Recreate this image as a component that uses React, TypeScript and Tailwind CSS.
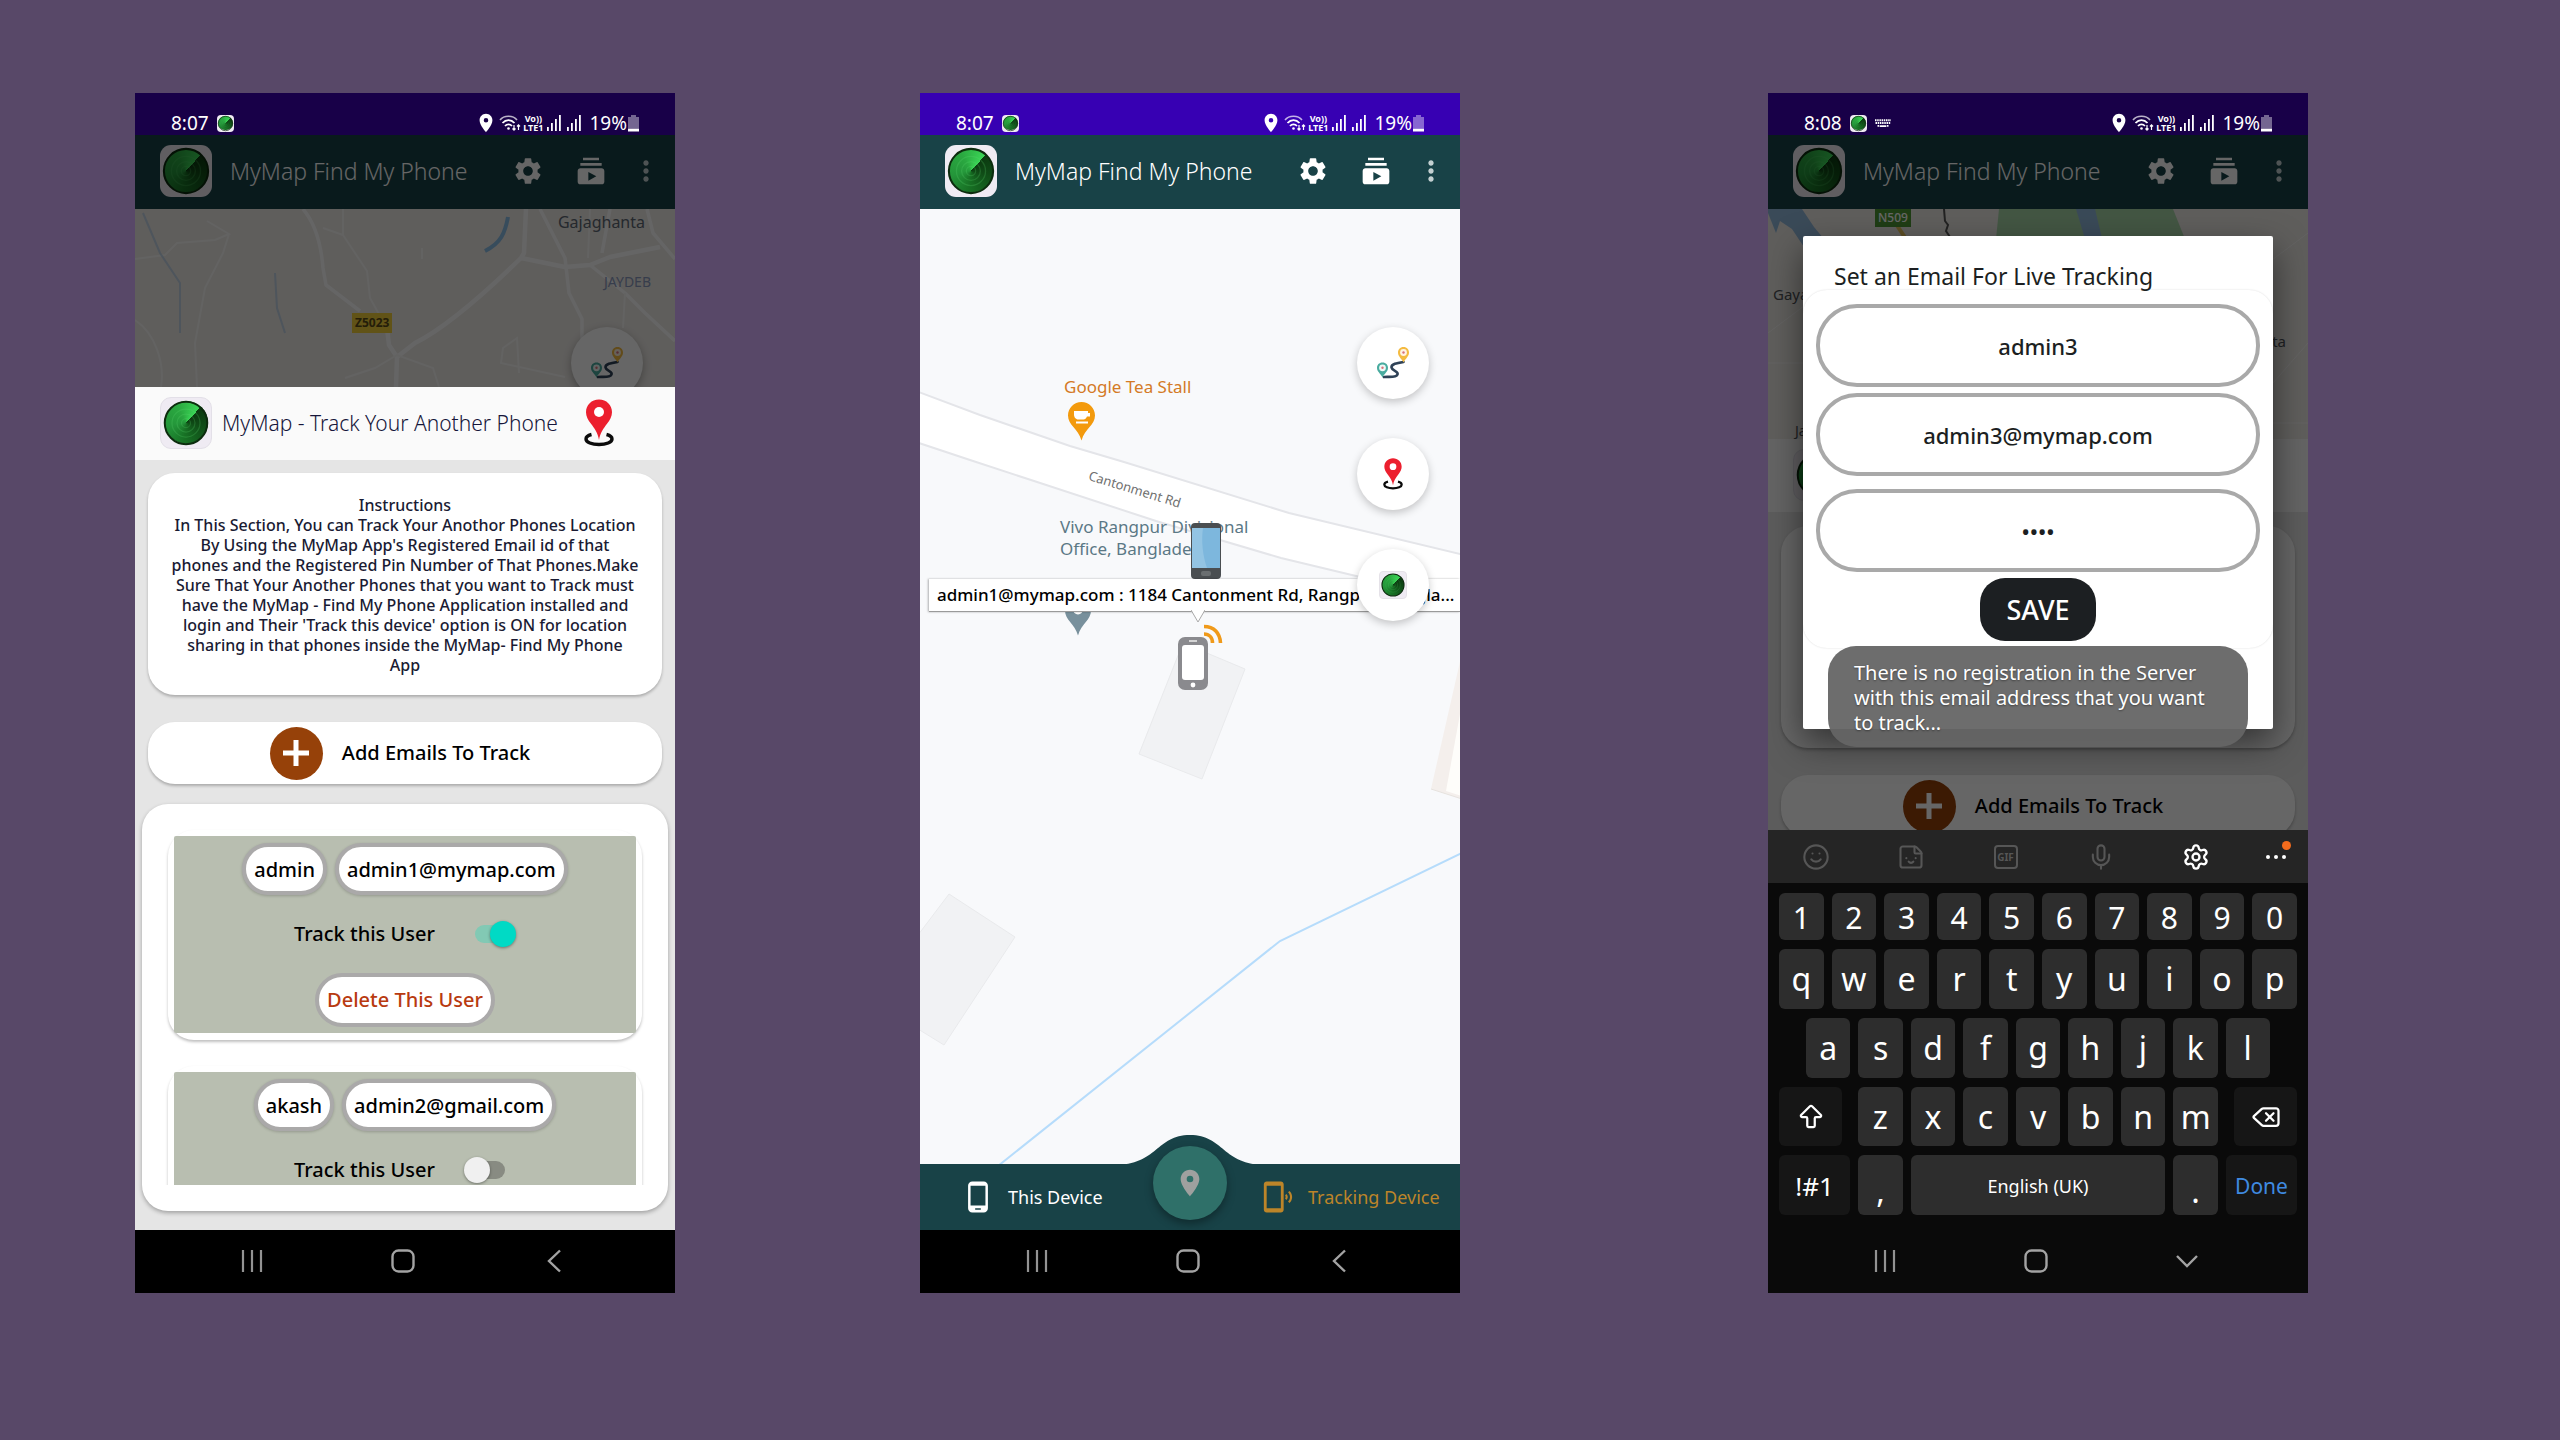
import { useState } from "react";
import type { ReactNode } from "react";
import {
  MdLocationOn,
  MdMoreVert,
  MdPhoneAndroid,
  MdPhonelinkRing,
  MdSettings,
  MdSubscriptions,
} from "react-icons/md";
import { ArrowBigUp, Delete, Mic, Settings, Smile, Sticker } from "lucide-react";

/* ---------- logo and pins ---------- */

function RadarLogo({ className }: { className: string }) {
  return (
    <span className={`relative block shrink-0 bg-[#efebf3] ${className}`}>
      <span className="absolute inset-[7%] rounded-full bg-[conic-gradient(from_42deg,#0b3a10,#0f4a16_15%,#177024_40%,#24963a_60%,#2aa840_80%,#3ad455)]" />
      <svg viewBox="0 0 100 100" className="absolute inset-0 h-full w-full" fill="none" aria-hidden="true">
        <circle cx="50" cy="50" r="42.5" stroke="#0c2c0e" strokeWidth="4" />
        <g stroke="#5ed873" strokeOpacity="0.22" strokeWidth="2.5">
          <circle cx="50" cy="50" r="9" />
          <circle cx="50" cy="50" r="18" />
          <circle cx="50" cy="50" r="28" />
        </g>
      </svg>
    </span>
  );
}

function RedPin({ className }: { className: string }) {
  return (
    <svg viewBox="0 0 30 48" className={className} fill="none" aria-hidden="true">
      <path
        d="M7.5 35.5C3.5 36.5 2 38.5 2 40c0 3.2 5.8 5.5 13 5.5S28 43.2 28 40c0-1.5-1.5-3.5-5.5-4.5"
        stroke="#0b0b0b"
        strokeWidth="3.4"
      />
      <path d="M15 0.5C7.5 0.5 2 6 2 13.2c0 4.3 2.2 7.8 4.8 11.3C10.5 29.5 14 34 15 41c1-7 4.5-11.5 8.2-16.5 2.6-3.5 4.8-7 4.8-11.3C28 6 22.5 0.5 15 0.5z" fill="#ec1f2e" />
      <circle cx="15" cy="13" r="5" fill="#fff" />
    </svg>
  );
}

function RouteIcon() {
  return (
    <svg viewBox="0 0 32 34" className="h-[34px] w-8" fill="none" aria-hidden="true">
      <path d="M26.5 16C20 17 14 18 14.5 21.5S22 25 20.5 28.5 12 30.5 7 31" stroke="#2f4257" strokeWidth="2.6" strokeLinecap="round" />
      <path d="M26.5 1C23 1 21 3.5 21 6.5c0 4 3.5 6 5.5 10 2-4 5.5-6 5.5-10C32 3.5 30 1 26.5 1z" fill="#f4bb41" />
      <circle cx="26.5" cy="6.5" r="3.4" fill="#fff3e4" />
      <circle cx="26.5" cy="6.5" r="1.2" fill="#d9727a" />
      <path d="M5.5 16.5c-3.5 0-5.5 2.5-5.5 5.3 0 4 3.5 5.7 5.5 9.7 2-4 5.5-5.7 5.5-9.7 0-2.8-2-5.3-5.5-5.3z" fill="#49ab9f" />
      <circle cx="5.5" cy="21.8" r="3.4" fill="#eef9f7" />
      <circle cx="5.5" cy="21.8" r="1.2" fill="#d9727a" />
    </svg>
  );
}

/* ---------- system chrome ---------- */

function SignalBars() {
  return (
    <svg viewBox="0 0 14 16" className="h-4 w-[14px]" fill="currentColor" aria-hidden="true">
      <rect x="0" y="12" width="1.8" height="4" />
      <rect x="4" y="8" width="1.8" height="8" />
      <rect x="8" y="4" width="1.8" height="12" />
      <rect x="12" y="0" width="1.8" height="16" />
    </svg>
  );
}

function StatusBar({ time, dimmed = false, keyboard = false }: { time: string; dimmed?: boolean; keyboard?: boolean }) {
  return (
    <header
      className={`flex h-[42px] items-center justify-between pt-[18px] pr-9 pl-9 text-white ${
        dimmed ? "bg-[#180048]" : "bg-[#3700b3]"
      }`}
    >
      <div className="flex items-center gap-2">
        <time className="text-[19px] leading-6">{time}</time>
        <RadarLogo className="h-[17px] w-[17px] rounded-[4px]" />
        {keyboard && (
          <svg viewBox="0 0 16 9" className="h-[9px] w-4" stroke="currentColor" fill="none" aria-hidden="true">
            <path d="M0 1.2h16M0.5 4h15" strokeWidth="2" strokeDasharray="1.5 0.7" />
            <path d="M2.5 6.8h1.5M4.6 7.2h6.8M12 6.8h1.5" strokeWidth="1.8" />
          </svg>
        )}
      </div>
      <div className="flex items-center">
        <MdLocationOn className="h-[22px] w-[22px]" />
        <svg viewBox="0 0 22 18" className="mr-[2px] ml-[2px] h-[18px] w-[22px]" fill="none" stroke="currentColor" aria-hidden="true">
          <path d="M1 6C5 1 14 1 18 6" strokeWidth="1.6" opacity="0.7" />
          <path d="M3.5 9C7 5.2 12 5.2 15.5 9" strokeWidth="1.8" />
          <path d="M6 12c2-2.2 5-2.2 7 0" strokeWidth="1.8" />
          <circle cx="9.5" cy="14.5" r="1.3" fill="currentColor" stroke="none" />
          <path d="M15 11v5M13.5 14.5L15 16.2l1.5-1.7M19.5 16v-5M18 12.5l1.5-1.7 1.5 1.7" strokeWidth="1.2" />
        </svg>
        <span className="mr-1 text-center text-[9px] leading-[9px] font-bold">
          Vo))
          <br />
          LTE1
        </span>
        <span className="mr-[6px]"><SignalBars /></span>
        <span className="mr-2"><SignalBars /></span>
        <span className="text-[19px] leading-6">19%</span>
        <svg viewBox="0 0 11 17" className="ml-px h-[17px] w-[11px]" fill="currentColor" aria-hidden="true">
          <path d="M3 0h5v2h3v11H0V2h3z" opacity="0.4" />
          <rect x="0" y="13.5" width="11" height="3" />
        </svg>
      </div>
    </header>
  );
}

function AppBar() {
  return (
    <div className="flex h-[74px] items-center bg-[#184247] pr-[13px] pb-[2px] pl-[25px] text-white">
      <RadarLogo className="h-[52px] w-[52px] rounded-[11px]" />
      <h1 className="ml-[18px] min-w-0 flex-1 truncate text-[23px] leading-8 font-light">MyMap Find My Phone</h1>
      <button type="button" aria-label="Settings"><MdSettings className="h-8 w-8" /></button>
      <button type="button" aria-label="Tutorials" className="ml-[31px]"><MdSubscriptions className="h-8 w-8" /></button>
      <button type="button" aria-label="More options" className="ml-[23px]"><MdMoreVert className="h-8 w-8 text-[#c3d0d1]" /></button>
    </div>
  );
}

function SystemNav({ down = false }: { down?: boolean }) {
  return (
    <nav
      aria-label="System"
      className={`flex h-[63px] items-center justify-center gap-[127px] pr-1 pb-[2px] ${down ? "bg-[#0a0a0a]" : "bg-black"}`}
    >
      <button type="button" aria-label="Recent apps" className="text-[#939393]">
        <svg viewBox="0 0 24 24" className="h-6 w-6" stroke="currentColor" strokeWidth="2.2" fill="none"><path d="M3 1v22M12 1v22M21 1v22" /></svg>
      </button>
      <button type="button" aria-label="Home" className="text-[#a3a3a3]">
        <svg viewBox="0 0 24 24" className="h-6 w-6" stroke="currentColor" strokeWidth="2.4" fill="none"><rect x="1.5" y="1.5" width="21" height="21" rx="6" /></svg>
      </button>
      <button type="button" aria-label={down ? "Hide keyboard" : "Back"} className="text-[#a3a3a3]">
        <svg viewBox="0 0 24 24" className="h-6 w-6" stroke="currentColor" strokeWidth="2.4" fill="none">
          {down ? <path d="M2 7l10 10L22 7" /> : <path d="M18 1.5L7 12l11 10.5" />}
        </svg>
      </button>
    </nav>
  );
}

/* ---------- shared tracking sheet ---------- */

function SheetHeader() {
  return (
    <div className="flex h-[73px] items-center bg-[#fafafa] pr-[61px] pb-[2px] pl-[25px]">
      <RadarLogo className="h-[52px] w-[52px] rounded-[11px] border border-[#e3e0e8]" />
      <h2 className="ml-[10px] truncate text-[21px] leading-8 font-light text-[#16163a]">MyMap - Track Your Another Phone</h2>
      <RedPin className="ml-auto h-12 w-[30px] shrink-0" />
    </div>
  );
}

function Instructions() {
  return (
    <section className="mx-[13px] rounded-[27px] bg-white pt-[22px] pb-5 text-center text-[16px] leading-5 font-medium text-[#1a1b33] shadow-[0_2px_3px_rgba(0,0,0,0.25)]">
      <h3>Instructions</h3>
      <p>
        In This Section, You can Track Your Anothor Phones Location
        <br />
        By Using the MyMap App's Registered Email id of that
        <br />
        phones and the Registered Pin Number of That Phones.Make
        <br />
        Sure That Your Another Phones that you want to Track must
        <br />
        have the MyMap - Find My Phone Application installed and
        <br />
        login and Their 'Track this device' option is ON for location
        <br />
        sharing in that phones inside the MyMap- Find My Phone
        <br />
        App
      </p>
    </section>
  );
}

function AddEmails() {
  return (
    <div className="mx-[13px] mt-[27px] rounded-[27px] bg-white shadow-[0_2px_3px_rgba(0,0,0,0.25)]">
      <button type="button" className="flex h-[62px] w-full items-center justify-center gap-[19px] pr-[10px]">
        <span className="flex h-[53px] w-[53px] items-center justify-center rounded-full bg-[#964109]">
          <svg viewBox="0 0 26 26" className="h-[26px] w-[26px]" stroke="#fff" strokeWidth="5" aria-hidden="true"><path d="M0 13h26M13 0v26" /></svg>
        </span>
        <span className="text-[20px] leading-6 font-medium text-black">Add Emails To Track</span>
      </button>
    </div>
  );
}

function Pill({ children }: { children: ReactNode }) {
  return (
    <span className="rounded-full border-4 border-[#aaa9a9] bg-white px-2 pt-[9px] pb-[7px] text-[20px] leading-7 font-medium shadow-[0_1px_3px_rgba(0,0,0,0.2)]">
      {children}
    </span>
  );
}

function TrackedUser({ id, name, email, tracked }: { id: string; name: string; email: string; tracked: boolean }) {
  const [on, setOn] = useState(tracked);
  return (
    <li className="mb-[26px] rounded-[26px] bg-white p-[6px] pb-[7px] shadow-[0_2px_3px_rgba(0,0,0,0.25)]">
      <div className="flex flex-col items-center rounded-[2px] bg-[#b8beb0] pt-[7px] pb-[6px] text-black">
        <div className="flex gap-2">
          <Pill>{name}</Pill>
          <Pill>{email}</Pill>
        </div>
        <div className="flex h-[78px] items-center gap-[29px]">
          <label htmlFor={id} className="text-[20px] leading-6 font-medium">Track this User</label>
          <input
            id={id}
            type="checkbox"
            role="switch"
            checked={on}
            onChange={() => setOn(!on)}
            className="relative h-[26px] w-[52px] appearance-none before:absolute before:top-1 before:left-[11px] before:h-[18px] before:w-[30px] before:rounded-full before:bg-[#888b82] after:absolute after:top-0 after:left-0 after:h-[26px] after:w-[26px] after:rounded-full after:bg-[#f0f0f0] after:shadow-[0_1px_3px_rgba(0,0,0,0.4)] checked:before:bg-[#82c9b4] checked:after:left-[26px] checked:after:bg-[#00dac5]"
          />
        </div>
        <button type="button" className="rounded-full border-4 border-[#aaa9a9] bg-white px-2 py-[9px] text-[20px] leading-7 font-medium text-[#b83a10]">
          Delete This User
        </button>
      </div>
    </li>
  );
}

/* ---------- screens ---------- */

function TrackScreen() {
  return (
    <article className="relative col-start-2 flex flex-col">
      <StatusBar time="8:07" dimmed />
      <div className="relative">
        <AppBar />
        <div className="relative h-[178px] overflow-hidden bg-[#edeae6]">
          <svg viewBox="0 116 540 178" preserveAspectRatio="xMidYMin slice" className="absolute inset-0 h-full w-full" fill="none" aria-hidden="true">
            <g stroke="#fdfdfd" strokeWidth="3.5" strokeLinejoin="round">
              <path d="M168 116C180 130 186 150 188 175L191 192 225 218" />
              <path d="M391 116L389 160 386 165C350 200 310 235 280 250L262 264 261 294M262 264L254 252 252 235" strokeWidth="4.5" />
              <path d="M386 165L430 174 455 172 475 164 525 154" strokeWidth="4.5" />
              <path d="M405 116L430 165 434 200 447 226 447 265" />
              <path d="M475 116L467 160M455 172L490 200 510 220 540 248" />
              <path d="M512 116L518 140 540 166" />
            </g>
            <g stroke="#f8f7f5" strokeWidth="2">
              <path d="M0 166L30 162 42 150 80 147 94 141 72 128M94 141L88 160 70 195 60 250 62 294" />
              <path d="M0 227C20 240 30 270 26 294M188 135L208 142 208 116M208 142L232 178 235 205 250 232" />
              <path d="M210 285L240 275 262 262 298 275 304 294M384 280L382 245 368 255 366 270 430 284M287 155V166" />
              <path d="M490 200L488 235M455 116L453 165" />
            </g>
            <path d="M8 120L25 160 45 190 45 240M140 180L142 215 150 240" stroke="#a5c4e4" strokeWidth="2" opacity="0.6" />
            <path d="M373 124C370 140 366 150 350 158" stroke="#8abde6" strokeWidth="4" />
          </svg>
          <span className="absolute top-px right-[30px] text-[16px] leading-6 text-[#5c6672]">Gajaghanta</span>
          <span className="absolute top-[61px] right-[24px] text-[14px] leading-6 text-[#8a99bd]">JAYDEB</span>
          <span className="absolute top-[104px] left-[217px] bg-[#f2cf3a] px-[3px] text-[12px] leading-5 font-bold text-[#5b4b17]">Z5023</span>
          <button type="button" aria-label="Route" className="absolute top-[118px] right-[32px] flex h-[72px] w-[72px] items-center justify-center rounded-full bg-white shadow-[0_3px_8px_rgba(0,0,0,0.3)]">
            <RouteIcon />
          </button>
        </div>
        <div className="absolute inset-0 bg-black/60" />
      </div>
      <SheetHeader />
      <div className="flex-1 bg-[#e5e5e5] pt-[13px] pb-[19px]">
        <Instructions />
        <AddEmails />
        <section className="mx-[7px] mt-5 rounded-[26px] bg-white pb-[26px] shadow-[0_2px_4px_rgba(0,0,0,0.3)]">
          <ul className="h-[381px] overflow-hidden px-[26px] pt-[26px]">
            <TrackedUser id="track-admin" name="admin" email="admin1@mymap.com" tracked />
            <TrackedUser id="track-akash" name="akash" email="admin2@gmail.com" tracked={false} />
          </ul>
        </section>
      </div>
      <SystemNav />
    </article>
  );
}

function Fab({ label, children }: { label: string; children: ReactNode }) {
  return (
    <button type="button" aria-label={label} className="flex h-[72px] w-[72px] items-center justify-center rounded-full bg-white shadow-[0_3px_8px_rgba(0,0,0,0.22)]">
      {children}
    </button>
  );
}

function MapScreen() {
  return (
    <article className="col-start-4 flex flex-col">
      <StatusBar time="8:07" />
      <AppBar />
      <div className="relative h-[955px] overflow-hidden bg-[#f8f9fb]">
        <svg viewBox="0 116 540 955" preserveAspectRatio="xMidYMin slice" className="absolute inset-0 h-full w-full" fill="none" aria-hidden="true">
          <path d="M-4 298L60 322 150 353 204 369 369 420 544 462V509L436 483 361 465 236 428 111 387 50 367-4 349z" fill="#fff" stroke="#e4e5e9" strokeWidth="2" />
          <path d="M263 550L325 576 282 686 219 661z" fill="#f1f2f4" stroke="#e9eaec" />
          <path d="M-2 842L29 801 95 844 24 952-2 936z" fill="#f1f2f4" stroke="#e9eaec" />
          <path d="M542 560L511 696 542 706z" fill="#f4efec" />
          <path d="M542 610L526 698 542 703z" fill="#fefdfa" />
          <path d="M511 696L542 706" stroke="#e6e2de" />
          <path d="M544 759L360 848 78 1073" stroke="#b6dcfb" strokeWidth="2" />
          {/* cafe marker */}
          <path d="M161.5 309c-7.5 0-13.5 6-13.5 13.5 0 9.5 10 13 13.5 25 3.5-12 13.5-15.5 13.5-25 0-7.5-6-13.5-13.5-13.5z" fill="#f39a0d" />
          <path d="M154 318h14v2h2v3.5h-3c-.8 2-2 3-3.5 3h-5c-3 0-4.5-2.5-4.5-5zM156 328.5h12v2h-12z" fill="#fff" />
          {/* place marker */}
          <path d="M158 504c-7.5 0-13 6-13 13.5 0 9.5 9.5 13 13 25 3.5-12 13-15.5 13-25 0-7.5-5.5-13.5-13-13.5z" fill="#78909c" />
          <circle cx="158" cy="516.5" r="5" fill="#fff" />
        </svg>

        <span className="absolute top-[166px] left-[144px] text-[17px] leading-6 text-[#d47a26]">Google Tea Stall</span>
        <span className="absolute top-[270px] left-[167px] origin-center rotate-17 text-[13px] leading-5 text-[#6f6f6f]">Cantonment Rd</span>
        <span className="absolute top-[307px] left-[140px] text-[17px] leading-[22px] text-[#5b7885]">
          Vivo Rangpur Divisional
          <br />
          Office, Bangladesh
        </span>

        <svg viewBox="0 0 32 56" className="absolute top-[314px] left-[270px] h-14 w-8" aria-hidden="true">
          <rect x="1" y="0" width="30" height="56" rx="4" fill="#4a4e51" />
          <rect x="2" y="5" width="28" height="40" fill="#7db7dd" />
          <path d="M2 5h11c-2 14 0 28 4 40H2z" fill="#93c4e3" />
          <rect x="11" y="48" width="10" height="5" rx="2" fill="#6a6e70" />
        </svg>

        <div className="absolute top-[370px] right-0 left-[9px] border-b border-[#9a9a9a] bg-white pl-2 shadow-[-1px_0_2px_rgba(0,0,0,0.3)]">
          <p className="text-[17px] leading-8 font-medium whitespace-nowrap text-black">
            admin1@mymap.com : 1184 Cantonment Rd, Rangpur, Bangla...
          </p>
        </div>
        <svg viewBox="0 0 14 13" className="absolute top-[401px] left-[271px] h-[13px] w-[14px]" aria-hidden="true">
          <path d="M0 0L7 12 14 0" fill="#fff" stroke="#a8a8a8" />
        </svg>

        <svg viewBox="0 0 46 68" className="absolute top-[414px] left-[257px] h-[68px] w-[46px]" fill="none" aria-hidden="true">
          <path d="M27 3.5C37 3.5 43 10 43.5 20M27 11c5 0 8.5 3.5 8.5 9" stroke="#f09a1a" strokeWidth="3.6" />
          <rect x="1" y="14" width="30" height="53" rx="7" fill="#8a8a8e" />
          <rect x="5" y="22" width="22" height="35" rx="3" fill="#fff" />
          <path d="M12 18h8" stroke="#e6e6e6" strokeWidth="1.6" />
          <circle cx="16" cy="62" r="2.4" fill="#fff" />
        </svg>

        <div className="absolute top-[118px] right-[31px] flex flex-col gap-[39px]">
          <Fab label="Route"><RouteIcon /></Fab>
          <Fab label="Locate phone"><RedPin className="h-8 w-5" /></Fab>
          <Fab label="Radar"><RadarLogo className="h-7 w-7 rounded-[4px] border border-[#e5e2e8]" /></Fab>
        </div>
      </div>

      <nav aria-label="Devices" className="relative grid h-[66px] grid-cols-2 bg-[#184247]">
        <svg viewBox="0 0 152 30" className="absolute -top-[29px] left-1/2 h-[30px] w-[152px] -translate-x-1/2" aria-hidden="true">
          <path d="M0 30C44 30 42 0 76 0s32 30 76 30z" fill="#184247" />
        </svg>
        <button type="button" className="flex items-center gap-[13px] pl-[41px] text-white">
          <MdPhoneAndroid className="h-[34px] w-[34px]" />
          <span className="text-[18px] leading-6">This Device</span>
        </button>
        <button type="button" className="flex items-center gap-[13px] pl-[71px] text-[#bd8529]">
          <MdPhonelinkRing className="h-[34px] w-[34px]" />
          <span className="text-[18px] leading-6">Tracking Device</span>
        </button>
        <button type="button" aria-label="Current location" className="absolute -top-[18px] left-1/2 flex h-[74px] w-[74px] -translate-x-1/2 items-center justify-center rounded-full bg-[#2f7069] text-[#9fa09f] shadow-[0_4px_8px_rgba(0,0,0,0.35)]">
          <MdLocationOn className="h-8 w-8" />
        </button>
      </nav>
      <SystemNav />
    </article>
  );
}

function Key({ children, dark = false, className = "flex-1 basis-0", label }: { children: ReactNode; dark?: boolean; className?: string; label?: string }) {
  return (
    <button
      type="button"
      aria-label={label}
      className={`flex h-full min-w-0 items-center justify-center rounded-[6px] leading-8 ${dark ? "bg-[#161616]" : "bg-[#2d2d2d]"} ${className}`}
    >
      {children}
    </button>
  );
}

function Keyboard() {
  return (
    <section aria-label="Keyboard" className="bg-[#0a0a0a] text-white">
      <div className="grid h-[53px] grid-cols-[95fr_95fr_95fr_95fr_95fr_65fr] place-items-center bg-[#252525] text-[#565656]">
        <button type="button" aria-label="Emoji"><Smile className="h-7 w-7" strokeWidth={1.8} /></button>
        <button type="button" aria-label="Stickers"><Sticker className="h-7 w-7" strokeWidth={1.8} /></button>
        <button type="button" className="h-6 w-6 rounded-[4px] border-2 border-current text-[10px] leading-5 font-bold">GIF</button>
        <button type="button" aria-label="Voice input"><Mic className="h-7 w-7" strokeWidth={1.8} /></button>
        <button type="button" aria-label="Keyboard settings" className="text-white"><Settings className="h-7 w-7" strokeWidth={2} /></button>
        <button type="button" aria-label="More" className="relative">
          <svg viewBox="0 0 24 24" className="h-6 w-6" fill="#fff"><circle cx="4" cy="12" r="2" /><circle cx="12" cy="12" r="2" /><circle cx="20" cy="12" r="2" /></svg>
          <span className="absolute -top-[4px] -right-[3px] h-[9px] w-[9px] rounded-full bg-[#f26b1d]" />
        </button>
      </div>
      <div className="flex flex-col gap-[9px] px-[11px] pt-[10px] pb-[15px] text-[32px]">
        <div className="flex h-[47px] gap-2 text-[30px]">
          {[..."1234567890"].map((k) => <Key key={k} className="flex-1 basis-0 pt-[2px]">{k}</Key>)}
        </div>
        <div className="flex h-[60px] gap-2">
          {[..."qwertyuiop"].map((k) => <Key key={k}>{k}</Key>)}
        </div>
        <div className="flex h-[60px] gap-2 px-[27px]">
          {[..."asdfghjkl"].map((k) => <Key key={k}>{k}</Key>)}
        </div>
        <div className="flex h-[59px] gap-2">
          <Key dark label="Shift" className="mr-2 w-[63px]"><ArrowBigUp className="h-[30px] w-[30px]" strokeWidth={1.8} /></Key>
          {[..."zxcvbnm"].map((k) => <Key key={k}>{k}</Key>)}
          <Key dark label="Backspace" className="ml-2 w-[63px]"><Delete className="h-[30px] w-[30px]" strokeWidth={1.8} /></Key>
        </div>
        <div className="flex h-[60px] gap-2">
          <Key dark className="w-[71px] pt-[2px] text-[26px]">!#1</Key>
          <Key className="w-[45px] pt-3">,</Key>
          <Key className="flex-1 pt-[2px] text-[18px]">English (UK)</Key>
          <Key className="w-[45px] pt-3">.</Key>
          <Key dark className="w-[71px] pt-[2px] text-[21px] text-[#3f8ae0]">Done</Key>
        </div>
      </div>
    </section>
  );
}

function Field({ label, type = "text", value, className = "" }: { label: string; type?: string; value: string; className?: string }) {
  return (
    <input
      type={type}
      aria-label={label}
      defaultValue={value}
      autoComplete="off"
      className={`h-[83px] w-full rounded-[41px] border-4 border-[#a9a9a9] bg-white text-center text-[22px] font-medium text-[#1c1f22] outline-none ${className}`}
    />
  );
}

function EmailScreen() {
  return (
    <article className="col-start-6 flex flex-col">
      <StatusBar time="8:08" dimmed keyboard />
      <div className="relative h-[695px] overflow-hidden">
        <AppBar />
        <div className="relative h-[230px] overflow-hidden bg-[#edeae6]">
          <svg viewBox="0 116 540 230" preserveAspectRatio="xMidYMin slice" className="absolute inset-0 h-full w-full" fill="none" aria-hidden="true">
            <path d="M231 116h84l15 0 75 0 12 30H228z" fill="#a9d6a9" />
            <path d="M308 116h19l12 50h-16z" fill="#92b9dc" />
            <path d="M0 116h34l12 18 10 12v20L36 154 24 136 12 128 8 140 0 120z" fill="#92b9dc" />
            <path d="M118 116l20 30" stroke="#e7c35c" strokeWidth="4" />
            <path d="M176 116l1 12 3 4-2 6 4 6 4 6" stroke="#555" strokeWidth="2" />
            <path d="M0 240l40-30M500 170l40-30M505 290l35-40M0 270h40M505 330h35" stroke="#fff" opacity="0.6" />
          </svg>
          <span className="absolute top-0 left-[107px] bg-[#4f9a36] px-[3px] text-[12px] leading-[18px] font-medium text-white">N509</span>
          <span className="absolute top-[73px] left-[5px] text-[15px] leading-6 text-[#4f5358]">Gayabari</span>
          <span className="absolute top-[120px] right-[22px] text-[15px] leading-6 text-[#4f5358]">Gajaghanta</span>
          <span className="absolute top-[212px] left-[27px] text-[14px] leading-5 text-[#4f5358]">Jaldhaka</span>
        </div>
        <SheetHeader />
        <div className="bg-[#e5e5e5] pt-[14px] pb-10">
          <Instructions />
          <AddEmails />
        </div>
        <div className="absolute inset-0 bg-black/60" />

        <form
          role="dialog"
          aria-label="Set an Email For Live Tracking"
          onSubmit={(e) => e.preventDefault()}
          className="absolute inset-x-[35px] top-[101px] h-[493px] rounded-[2px] bg-white pt-[27px] shadow-[0_14px_34px_rgba(0,0,0,0.5)]"
        >
          <h2 className="px-[31px] text-[23px] leading-[27px] text-[#1c1f22]">Set an Email For Live Tracking</h2>
          <div className="flex flex-col items-center rounded-[24px] px-[13px] pt-[14px] pb-[7px] shadow-[0_0_2px_rgba(0,0,0,0.15)]">
            <Field label="Name" value="admin3" />
            <Field label="Email" value="admin3@mymap.com" className="mt-[6px]" />
            <Field label="Pin number" type="password" value="1234" className="mt-[13px]" />
            <button type="submit" className="mt-[6px] h-[63px] rounded-[25px] bg-[#1c1f22] px-[26px] text-[27px] leading-8 font-medium text-white">
              SAVE
            </button>
          </div>
        </form>

        <p role="status" className="absolute inset-x-[60px] top-[511px] rounded-[28px] bg-[#656565]/95 px-[26px] pt-[14px] pb-3 text-[20px] leading-[25px] text-white [text-shadow:0_1px_2px_rgba(0,0,0,0.4)]">
          There is no registration in the Server
          <br />
          with this email address that you want
          <br />
          to track...
        </p>
      </div>
      <Keyboard />
      <SystemNav down />
    </article>
  );
}

export default function App() {
  return (
    <main className="grid min-h-screen grid-cols-[135fr_540fr_245fr_540fr_308fr_540fr_252fr] items-start bg-[#584868] pt-[93px] pb-12 font-['Noto_Sans',sans-serif]">
      <TrackScreen />
      <MapScreen />
      <EmailScreen />
    </main>
  );
}
